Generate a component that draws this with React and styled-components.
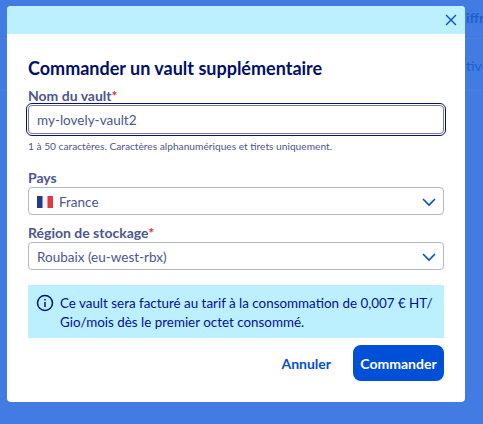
import React from 'react';
import styled, { createGlobalStyle } from 'styled-components';

const GlobalStyle = createGlobalStyle`
  html, body { margin: 0; padding: 0; }
  body { width: 483px; height: 424px; overflow: hidden; font-family: 'Lato', 'Liberation Sans', sans-serif; }
`;

const Page = styled.div`
  position: relative;
  width: 483px;
  height: 424px;
  overflow: hidden;
  background: #427be2;
`;

const BackRow = styled.div`
  height: ${(p) => p.$h}px;
  box-sizing: border-box;
  border-bottom: 1px solid #4a80dc;
  padding-left: 466px;
  padding-top: ${(p) => p.$top}px;
  white-space: nowrap;
  font-size: 14px;
  font-weight: ${(p) => p.$weight};
  color: #1d5fd0;
`;

const Modal = styled.div`
  position: absolute;
  left: 7px;
  top: 6px;
  width: 458px;
  height: 396px;
  background: #fff;
  border-radius: 4px;
  overflow: hidden;
`;

const ModalHeader = styled.div`
  height: 28px;
  background: #bdf0ff;
  display: flex;
  justify-content: flex-end;
  align-items: center;
  padding-right: 7px;
  color: #0050d7;
`;

const ModalBody = styled.div`
  padding: 22px 21px 0;
  display: flex;
  flex-direction: column;
`;

const Title = styled.h2`
  margin: 0 0 7px;
  font-size: 18px;
  line-height: 24px;
  font-weight: 700;
  color: #000e6e;
`;

const Label = styled.label`
  display: block;
  font-size: 14px;
  line-height: 18px;
  font-weight: 700;
  color: #4d5592;
`;

const Star = styled.span`
  color: #d32f3c;
`;

const TextInput = styled.div`
  box-sizing: border-box;
  height: 29px;
  display: flex;
  align-items: center;
  padding: 1px 0 0 8px;
  font-size: 13.5px;
  color: #4d5592;
  background: #fff;
  border: 1px solid #7c7c80;
  border-radius: 4px;
  outline: 1.5px solid #000e9c;
  outline-offset: 1px;
`;

const Help = styled.div`
  font-size: 10.2px;
  line-height: 12px;
  margin-top: 6px;
  margin-bottom: 17px;
  color: #4d5592;
`;

const Select = styled.div`
  box-sizing: border-box;
  height: 28px;
  margin-bottom: ${(p) => p.$gap || 0}px;
  display: flex;
  align-items: center;
  gap: 6px;
  padding: 1px 6px 0 8px;
  font-size: 13.5px;
  color: #4d5592;
  border: 1px solid #b3b7c8;
  border-radius: 4px;
`;

const SelectText = styled.span`
  flex: 1;
`;

const Chevron = styled.svg`
  width: 16px;
  height: 16px;
  color: #0050d7;
`;

const Message = styled.div`
  box-sizing: border-box;
  height: 53px;
  margin-top: 15px;
  padding: 9px 8px 0;
  display: flex;
  gap: 6px;
  background: #bdf0ff;
  color: #000e9c;
  font-size: 13.4px;
  line-height: 19px;
`;

const MessageIcon = styled.svg`
  flex: none;
  width: 18px;
  height: 18px;
`;

const Actions = styled.div`
  display: flex;
  justify-content: flex-end;
  align-items: center;
  gap: 22px;
  margin-top: 7px;
`;

const Button = styled.button`
  box-sizing: border-box;
  height: 36px;
  padding: 0 ${(p) => (p.$primary ? 7 : 0)}px;
  width: ${(p) => (p.$primary ? '91px' : 'auto')};
  border: 0;
  border-radius: 8px;
  font-family: inherit;
  font-size: 14px;
  font-weight: 700;
  color: ${(p) => (p.$primary ? '#fff' : '#0050d7')};
  background: ${(p) => (p.$primary ? '#0050d7' : 'transparent')};
`;

const Flag = () => (
  <svg width="16" height="12" viewBox="0 0 16 12">
    <rect width="6" height="12" fill="#1f3a8a" />
    <rect x="5.5" width="5" height="12" fill="#f4f4f6" />
    <rect x="10.5" width="5.5" height="12" fill="#e03a3e" />
  </svg>
);

const ChevronDown = () => (
  <Chevron viewBox="0 0 16 16" fill="none" stroke="currentColor" strokeWidth="1.6">
    <path d="M2 5l6 6 6-6" />
  </Chevron>
);

export default function App() {
  return (
    <>
      <GlobalStyle />
      <Page>
        <BackRow $h={39} $top={9} $weight={700}>iffrement</BackRow>
        <BackRow $h={52} $top={18} $weight={400}>tivé</BackRow>
        <Modal>
          <ModalHeader>
            <svg width="14" height="14" viewBox="0 0 14 14" fill="none" stroke="currentColor" strokeWidth="1.4">
              <path d="M2 2l10 10M12 2L2 12" />
            </svg>
          </ModalHeader>
          <ModalBody>
            <Title>Commander un vault supplémentaire</Title>
            <Label>Nom du vault<Star>*</Star></Label>
            <TextInput>my-lovely-vault2</TextInput>
            <Help>1 à 50 caractères. Caractères alphanumériques et tirets uniquement.</Help>
            <Label>Pays</Label>
            <Select $gap={9}>
              <Flag />
              <SelectText>France</SelectText>
              <ChevronDown />
            </Select>
            <Label>Région de stockage<Star>*</Star></Label>
            <Select>
              <SelectText>Roubaix (eu-west-rbx)</SelectText>
              <ChevronDown />
            </Select>
            <Message>
              <MessageIcon viewBox="0 0 18 18" fill="none" stroke="currentColor" strokeWidth="1.5">
                <circle cx="9" cy="9" r="7.5" />
                <path d="M9 8v5" />
                <path d="M9 5v1.4" />
              </MessageIcon>
              <span>Ce vault sera facturé au tarif à la consommation de 0,007 € HT/<wbr />Gio/mois dès le premier octet consommé.</span>
            </Message>
            <Actions>
              <Button>Annuler</Button>
              <Button $primary>Commander</Button>
            </Actions>
          </ModalBody>
        </Modal>
      </Page>
    </>
  );
}
